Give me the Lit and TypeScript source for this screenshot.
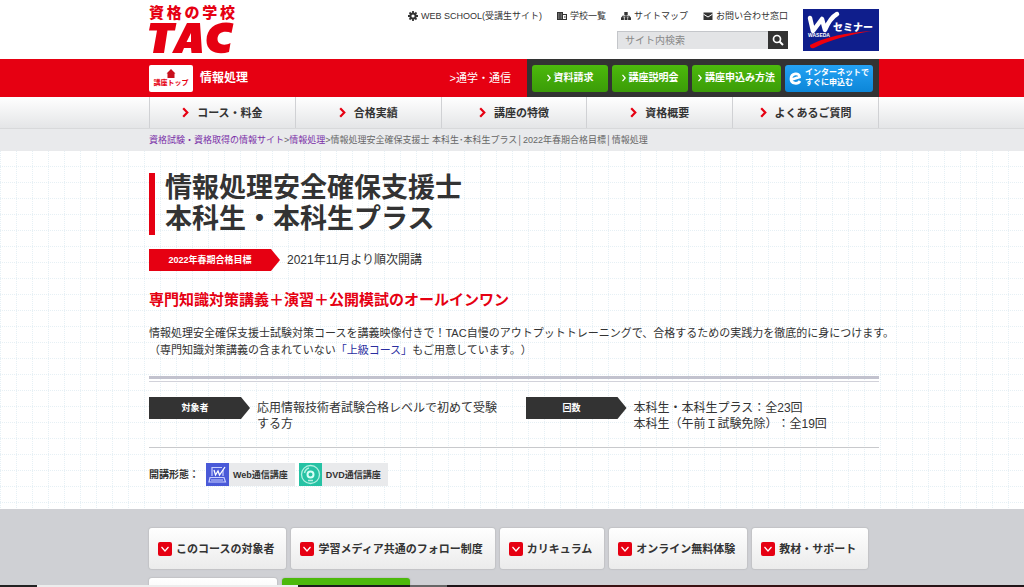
import { LitElement, html, css, svg } from "lit";
import { customElement } from "lit/decorators.js";
import { classMap } from "lit/directives/class-map.js";

const NAV = ["コース・料金", "合格実績", "講座の特徴", "資格概要", "よくあるご質問"];
const CTAS = ["資料請求", "講座説明会", "講座申込み方法"];
const ANCHORS = [
  "このコースの対象者",
  "学習メディア共通のフォロー制度",
  "カリキュラム",
  "オンライン無料体験",
  "教材・サポート",
];

const gear = svg`<circle cx="5" cy="5" r="2.6" fill="none" stroke="#333" stroke-width="2"/>
  <path d="M5 0v2M5 8v2M0 5h2M8 5h2M1.5 1.5l1.3 1.3M7.2 7.2l1.3 1.3M8.5 1.5L7.2 2.8M2.8 7.2L1.5 8.5" stroke="#333" stroke-width="1.8"/>`;
const school = svg`<path d="M0 1h6v8H0z" fill="#333"/><path d="M1.2 3h1.2M3.6 3h1.2M1.2 5h1.2M3.6 5h1.2M1.2 7h1.2M3.6 7h1.2" stroke="#fff" stroke-width="0.700"/>
  <path d="M6 3.500h3.500v5H6M7 6h1.500" fill="none" stroke="#333" stroke-width="1.200"/>`;
const sitemap = svg`<path d="M3.300 1h3.400v3h-3.400zM0 6.200h2.900V9H0zM3.600 6.200h2.900V9H3.600zM7.100 6.200H10V9H7.100z" fill="#333"/>
  <path d="M5 4v3M1.400 6.800V5.200h7.200v1.600" fill="none" stroke="#333" stroke-width="1"/>`;
const mail = svg`<path d="M0.500 1.500h9v7.500h-9z" fill="#333"/><path d="M0.500 3.200L5 6l4.500-2.800" fill="none" stroke="#fff" stroke-width="1"/>`;

const TOP_LINKS = [
  { icon: gear, label: "WEB SCHOOL(受講生サイト)" },
  { icon: school, label: "学校一覧" },
  { icon: sitemap, label: "サイトマップ" },
  { icon: mail, label: "お問い合わせ窓口" },
];

@customElement("app-root")
export class AppRoot extends LitElement {
  static styles = css`
    :host {
      display: block;
      height: 100vh;
      overflow: hidden;
      background: #cfd0d4;
      color: #333;
      font-family: "Liberation Sans", "Noto Sans CJK JP", sans-serif;
      font-size: 12px;
      line-height: 16px;
      text-spacing-trim: space-all;
    }
    * { box-sizing: border-box; }
    a { color: inherit; text-decoration: none; }
    h1, h2, p, ul, dl, dd { margin: 0; padding: 0; }
    ul { list-style: none; }
    svg { display: block; flex: none; }
    .wrap { max-width: 734px; margin: 0 auto; padding-left: 4px; }

    .top { background: #fff; }
    .top .wrap { display: flex; height: 59px; }
    .logo { display: flex; flex-direction: column; color: #e60012; font-weight: 900; padding-top: 4px; }
    .logo-sub { display: flex; justify-content: space-between; width: 86px; font-size: 15px; line-height: 17px; }
    .tools { margin-left: auto; display: flex; flex-direction: column; align-items: flex-end; padding-top: 9px; gap: 8px; }
    .links { display: flex; gap: 15px; font-size: 9px; line-height: 14px; }
    .links a { display: flex; align-items: center; gap: 3px; white-space: nowrap; }
    .search { display: flex; width: 171px; height: 18px; }
    .search input {
      flex: 1; min-width: 0; border: 0; border-left: 1px solid #c4c6ca; border-top: 1px solid #c4c6ca; border-radius: 0;
      background: #e3e4e6; padding: 0 7px; font: inherit; font-size: 10px; color: #333;
    }
    .search input::placeholder { color: #888; }
    .search button { width: 20px; border: 0; padding: 0; background: #333; display: grid; place-items: center; }
    .seminar { margin: 9px 0 0 15px; }

    .bar { background: #e60012; }
    .bar .wrap { display: flex; align-items: center; height: 38px; color: #fff; }
    .home {
      display: flex; flex-direction: column; align-items: center; width: 44px; height: 27px; padding-top: 4px;
      background: #fff; border-radius: 2px; color: #e60012; font-size: 7px; line-height: 10px; font-weight: bold; white-space: nowrap;
    }
    .subject { margin-left: 7px; font-size: 12px; font-weight: bold; }
    .mode { margin-left: auto; font-size: 11px; }
    .ctas { display: flex; align-items: center; gap: 4px; height: 38px; margin-left: 16px; padding: 0 6px 0 5px; background: #333; }
    .cta {
      display: flex; align-items: center; justify-content: center; gap: 3px; height: 27px; min-width: 76px; padding: 0 6px;
      border-radius: 3px; background: linear-gradient(#4cb90c, #3b9c08); font-size: 10px; font-weight: bold; white-space: nowrap;
    }
    .net { gap: 3px; width: 88px; padding: 0 3px; background: linear-gradient(#24a2f4, #0c86d8); font-size: 8px; line-height: 10px; }

    .nav { background: linear-gradient(#fff, #e4e5e7); border-bottom: 1px solid #d8d9db; }
    .nav ul { display: flex; border-left: 1px solid #d0d1d4; }
    .nav li { flex: 1; border-right: 1px solid #d0d1d4; }
    .nav a { display: flex; align-items: center; justify-content: center; gap: 8px; height: 31px; font-size: 11px; font-weight: bold; }

    .crumbs { background: #e9eaec; font-size: 9px; line-height: 22px; color: #666; white-space: nowrap; }
    .crumbs a { color: #7a2ea8; }

    .main {
      background: #fff url("data:image/svg+xml,%3Csvg xmlns='http://www.w3.org/2000/svg' width='16' height='16'%3E%3Cpath d='M.5 0v16M0 15.5h16' stroke='%23e6f0f5' stroke-dasharray='1 1'/%3E%3C/svg%3E");
    }
    .main .wrap { padding-top: 22px; padding-bottom: 23px; }
    h1 { border-left: 6px solid #e60012; padding-left: 10px; font-size: 27px; line-height: 31px; }
    .term { display: flex; align-items: center; gap: 7px; margin-top: 14px; }
    .tag {
      flex: none; display: block; width: 101px; height: 22px; padding-right: 9px; background: #333; color: #fff;
      font-size: 9px; line-height: 22px; font-weight: bold; text-align: center;
      clip-path: polygon(0 0, calc(100% - 9px) 0, 100% 50%, calc(100% - 9px) 100%, 0 100%);
    }
    .tag.red { width: 131px; background: #e60012; }
    h2 { margin-top: 18px; color: #e60012; font-size: 15px; line-height: 22px; }
    .lead { margin-top: 14px; font-size: 11px; line-height: 17px; white-space: nowrap; }
    .lead a { color: #2a2ea0; }
    .double { height: 6px; margin-top: 17px; border-top: 3px solid #c2c2ce; border-bottom: 1px solid #d2d2da; }
    .facts { display: grid; grid-template-columns: 1fr 1fr; gap: 23px; padding: 15px 0 15px; border-bottom: 1px solid #c8c9cc; }
    .fact { display: flex; gap: 7px; }
    .fact dd { padding-top: 3px; }
    .forms { display: flex; align-items: center; gap: 4px; margin-top: 15px; font-size: 10px; font-weight: bold; }
    .forms-label { padding-right: 3px; }
    .form { display: flex; align-items: center; gap: 4px; height: 23px; padding-right: 7px; background: #e9eaec; font-size: 9px; white-space: nowrap; }

    .anchors .wrap { padding-top: 19px; }
    .row { display: flex; flex-wrap: wrap; gap: 9px 5px; }
    .anchor {
      display: flex; align-items: center; gap: 4px; height: 41px; padding: 0 12px 0 9px; border-radius: 3px;
      background: linear-gradient(#fff, #ebebeb); box-shadow: 0 0 1px 1px #c2c3c6; font-size: 11px; font-weight: bold; white-space: nowrap;
    }
    .blank { width: 128px; }
    .green { background: #4cb90c; }
    .dock {
      position: fixed; left: 0; right: 0; bottom: 0; height: 2px;
      background: linear-gradient(90deg, #222 37px, #ededed 37px 298px, #1c1c1c 298px 410px, #666 410px 447px, #1c1418 447px, #401010 650px, #201418);
    }
  `;

  private arrow() {
    return html`<svg width="7" height="11" viewBox="0 0 7 11" aria-hidden="true"><path d="M1.200 1.200L5.300 5.500L1.200 9.800" fill="none" stroke="#e60012" stroke-width="2.200"/></svg>`;
  }

  private header() {
    return html`
      <header class="top"><div class="wrap">
        <a class="logo" href="#" aria-label="資格の学校 TAC">
          <span class="logo-sub">${[..."資格の学校"].map((c) => html`<span>${c}</span>`)}</span>
          <svg width="86" height="33" viewBox="0 0 86 33" fill="#e60012" aria-hidden="true">
            <path d="M1.500 2H27.500L26 9.500H18.500L15 32H4L8 9.500H0z"/>
            <path fill-rule="evenodd" d="M38 2H51L53 32H42.500L42 27H35L33 32H23zM42 12L37.500 21H42z"/>
            <path d="M84.500 2.500L82.500 12C76 9 68.500 11 68.500 18C68.500 24 76 25 81.500 22L80 31C69 34.500 57.500 31 57.500 19.500C57.500 5 71-1 84.500 2.500z"/>
          </svg>
        </a>
        <div class="tools">
          <nav class="links" aria-label="サイト">
            ${TOP_LINKS.map((l) => html`<a href="#"><svg width="10" height="10" viewBox="0 0 10 10" aria-hidden="true">${l.icon}</svg>${l.label}</a>`)}
          </nav>
          <form class="search" @submit=${(e: Event) => e.preventDefault()}>
            <input type="text" placeholder="サイト内検索" aria-label="サイト内検索" />
            <button type="submit" aria-label="検索">
              <svg width="12" height="12" viewBox="0 0 12 12"><circle cx="5" cy="5" r="3.500" fill="none" stroke="#fff" stroke-width="1.700"/><path d="M7.500 7.500L11 11" stroke="#fff" stroke-width="2"/></svg>
            </button>
          </form>
        </div>
        <a class="seminar" href="#" aria-label="Wセミナー">
          <svg width="76" height="42" viewBox="0 0 76 42">
            <path d="M0 0h76v42H0z" fill="#0f1e8c"/>
            <path d="M7 9L10 22L19 10L22 21Q27 9 34 5" fill="none" stroke="#fff" stroke-width="4.500" stroke-linecap="round" stroke-linejoin="round"/>
            <path d="M7 36Q30 24 69 22Q32 28 11 39Q7 40 7 36z" fill="#f0000c"/>
            <text x="5" y="28" font-size="5" font-weight="900" fill="#fff">WASEDA</text>
            <text x="30" y="22" font-size="10" font-weight="900" fill="#fff">セミナー</text>
          </svg>
        </a>
      </div></header>
      <div class="bar"><div class="wrap">
        <a class="home" href="#"><svg width="10" height="9" viewBox="0 0 10 9" aria-hidden="true"><path d="M5 0L9.500 4.500H8.500V9H1.500V4.500H0.500z" fill="#c8101c"/></svg>講座トップ</a>
        <a class="subject" href="#">情報処理</a>
        <a class="mode" href="#">&gt;通学・通信</a>
        <div class="ctas">
          ${CTAS.map((c) => html`<a class="cta" href="#"><svg width="4" height="8" viewBox="0 0 4 8" aria-hidden="true"><path d="M0.500 0.800L3.200 4L0.500 7.200" fill="none" stroke="#fff" stroke-width="1.300"/></svg>${c}</a>`)}
          <a class="cta net" href="#">
            <svg width="13" height="14" viewBox="0 0 13 14" aria-hidden="true"><path d="M3 8.500L10.500 6C10.500 1 2 2 2 8C2 13 9 13.500 11 10" fill="none" stroke="#fff" stroke-width="2.800"/></svg>
            <span>インターネットで<br />すぐに申込む</span>
          </a>
        </div>
      </div></div>
      <nav class="nav"><div class="wrap"><ul>
        ${NAV.map((n) => html`<li><a href="#">${this.arrow()}${n}</a></li>`)}
      </ul></div></nav>
      <div class="crumbs"><div class="wrap"><a href="#">資格試験・資格取得の情報サイト</a>&gt;<a href="#">情報処理</a>&gt;情報処理安全確保支援士 本科生･本科生プラス│2022年春期合格目標│情報処理</div></div>
    `;
  }

  private course() {
    return html`
      <main class="main"><div class="wrap">
        <h1>情報処理安全確保支援士<br />本科生・本科生プラス</h1>
        <p class="term"><span class="tag red">2022年春期合格目標</span>2021年11月より順次開講</p>
        <h2>専門知識対策講義＋演習＋公開模試のオールインワン</h2>
        <p class="lead">情報処理安全確保支援士試験対策コースを講義映像付きで！TAC自慢のアウトプットトレーニングで、合格するための実践力を徹底的に身につけます。<br />（専門知識対策講義の含まれていない<a href="#">「上級コース」</a>もご用意しています。）</p>
        <div class="double"></div>
        <dl class="facts">
          <div class="fact"><dt class="tag">対象者</dt><dd>応用情報技術者試験合格レベルで初めて受験する方</dd></div>
          <div class="fact"><dt class="tag">回数</dt><dd>本科生・本科生プラス：全23回<br />本科生（午前Ｉ試験免除）：全19回</dd></div>
        </dl>
        <div class="forms">
          <span class="forms-label">開講形態：</span>
          <span class="form">
            <svg width="23" height="23" viewBox="0 0 23 23" aria-hidden="true"><path d="M0 0h23v23H0z" fill="#4a5ad8"/><path d="M6 13V4.500h10M17 7v6M4 14.500h14l1.500 4.500H3zM5 17h12" fill="none" stroke="#c9d0ff" stroke-width="1.200"/><path d="M8 7l1.500 5 2.500-4 1.500 4L19 4" fill="none" stroke="#fff" stroke-width="1.300"/></svg>Web通信講座</span>
          <span class="form">
            <svg width="23" height="23" viewBox="0 0 23 23" aria-hidden="true"><path d="M0 0h23v23H0z" fill="#26c2a4"/><circle cx="11.500" cy="11.500" r="9" fill="none" stroke="#b4f0e2" stroke-width="1.300"/><circle cx="11.500" cy="11.500" r="3" fill="none" stroke="#d8fff6" stroke-width="2"/><path d="M5.500 10Q6.500 6 10 5M9 17.500h5" fill="none" stroke="#b4f0e2" stroke-width="1.500"/></svg>DVD通信講座</span>
        </div>
      </div></main>
    `;
  }

  render() {
    return html`
      ${this.header()} ${this.course()}
      <nav class="anchors"><div class="wrap"><div class="row">
        ${ANCHORS.map((a) => html`<a class="anchor" href="#"><svg width="14" height="14" viewBox="0 0 14 14" aria-hidden="true"><rect width="14" height="14" rx="2" fill="#e60012"/><path d="M3.500 5L7 9L10.500 5" fill="none" stroke="#fff" stroke-width="1.200"/></svg>${a}</a>`)}
        ${[false, true].map((green) => html`<span class=${classMap({ anchor: true, blank: true, green })}></span>`)}
      </div></div></nav>
      <div class="dock"></div>
    `;
  }
}
